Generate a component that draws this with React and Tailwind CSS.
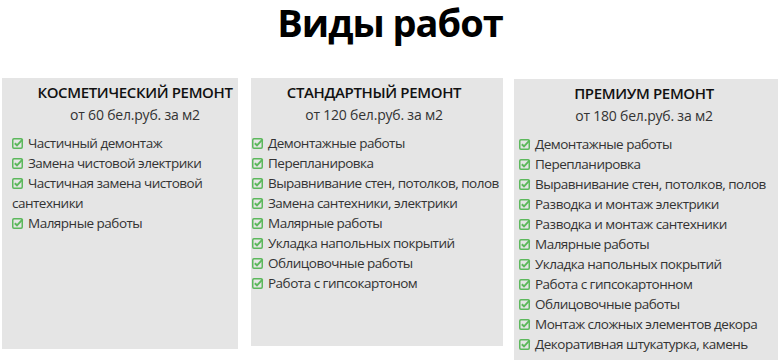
import React from "react";

const Check = () => (
  <svg width="12" height="12" viewBox="0 0 12 12" className="inline-block align-[-1px] mr-[4px]">
    <rect x="0.75" y="1.75" width="9.5" height="9.5" rx="1.2" fill="none" stroke="#5cb85c" strokeWidth="1.5" />
    <path d="M2.8 6.2 L5 8.3 L10.6 2.4" fill="none" stroke="#5cb85c" strokeWidth="1.9" />
  </svg>
);

const cards = [
  {
    box: "w-[236px] h-[271px] mr-[13px] pl-[10px] pr-[4px]",
    head: "pl-[24px]",
    title: "КОСМЕТИЧЕСКИЙ РЕМОНТ",
    price: "от 60 бел.руб. за м2",
    items: [
      "Частичный демонтаж",
      "Замена чистовой электрики",
      "Частичная замена чистовой сантехники",
      "Малярные работы",
    ],
  },
  {
    box: "w-[252px] h-[268px] mr-[11px] pl-[1px] pr-[1px]",
    head: "pr-[6px]",
    title: "СТАНДАРТНЫЙ РЕМОНТ",
    price: "от 120 бел.руб. за м2",
    items: [
      "Демонтажные работы",
      "Перепланировка",
      "Выравнивание стен, потолков, полов",
      "Замена сантехники, электрики",
      "Малярные работы",
      "Укладка напольных покрытий",
      "Облицовочные работы",
      "Работа с гипсокартоном",
    ],
  },
  {
    box: "w-[264px] h-[290px] mt-[1px] pl-[5px] pr-[1px]",
    head: "pr-[8px]",
    title: "ПРЕМИУМ РЕМОНТ",
    price: "от 180 бел.руб. за м2",
    items: [
      "Демонтажные работы",
      "Перепланировка",
      "Выравнивание стен, потолков, полов",
      "Разводка и монтаж электрики",
      "Разводка и монтаж сантехники",
      "Малярные работы",
      "Укладка напольных покрытий",
      "Работа с гипсокартонном",
      "Облицовочные работы",
      "Монтаж сложных элементов декора",
      "Декоративная штукатурка, камень",
    ],
  },
];

export default function App() {
  return (
    <div className="w-[780px] h-[360px] overflow-hidden bg-white text-[#333]" style={{ fontFamily: '"Open Sans", sans-serif' }}>
      <h1 className="h-[78px] text-center text-[38px] leading-[44px] font-bold text-black tracking-[-1px]">
        Виды работ
      </h1>
      <div className="flex items-start pl-[2px]">
        {cards.map((c, i) => (
          <div key={i} className={`${c.box} bg-[#e5e5e5] pt-[4px] shrink-0`}>
            <div className={`${c.head} text-center`}>
              <div className="text-[15px] leading-[20px] font-semibold text-[#111] whitespace-nowrap tracking-[-0.35px]">
                {c.title}
              </div>
              <div className="text-[14px] leading-[20px] mt-[3px] mb-[8px] tracking-[-0.2px]">{c.price}</div>
            </div>
            <ul>
              {c.items.map((t, j) => (
                <li key={j} className="text-[13.5px] leading-[20px] tracking-[-0.5px]">
                  <Check />
                  {t}
                </li>
              ))}
            </ul>
          </div>
        ))}
      </div>
    </div>
  );
}
